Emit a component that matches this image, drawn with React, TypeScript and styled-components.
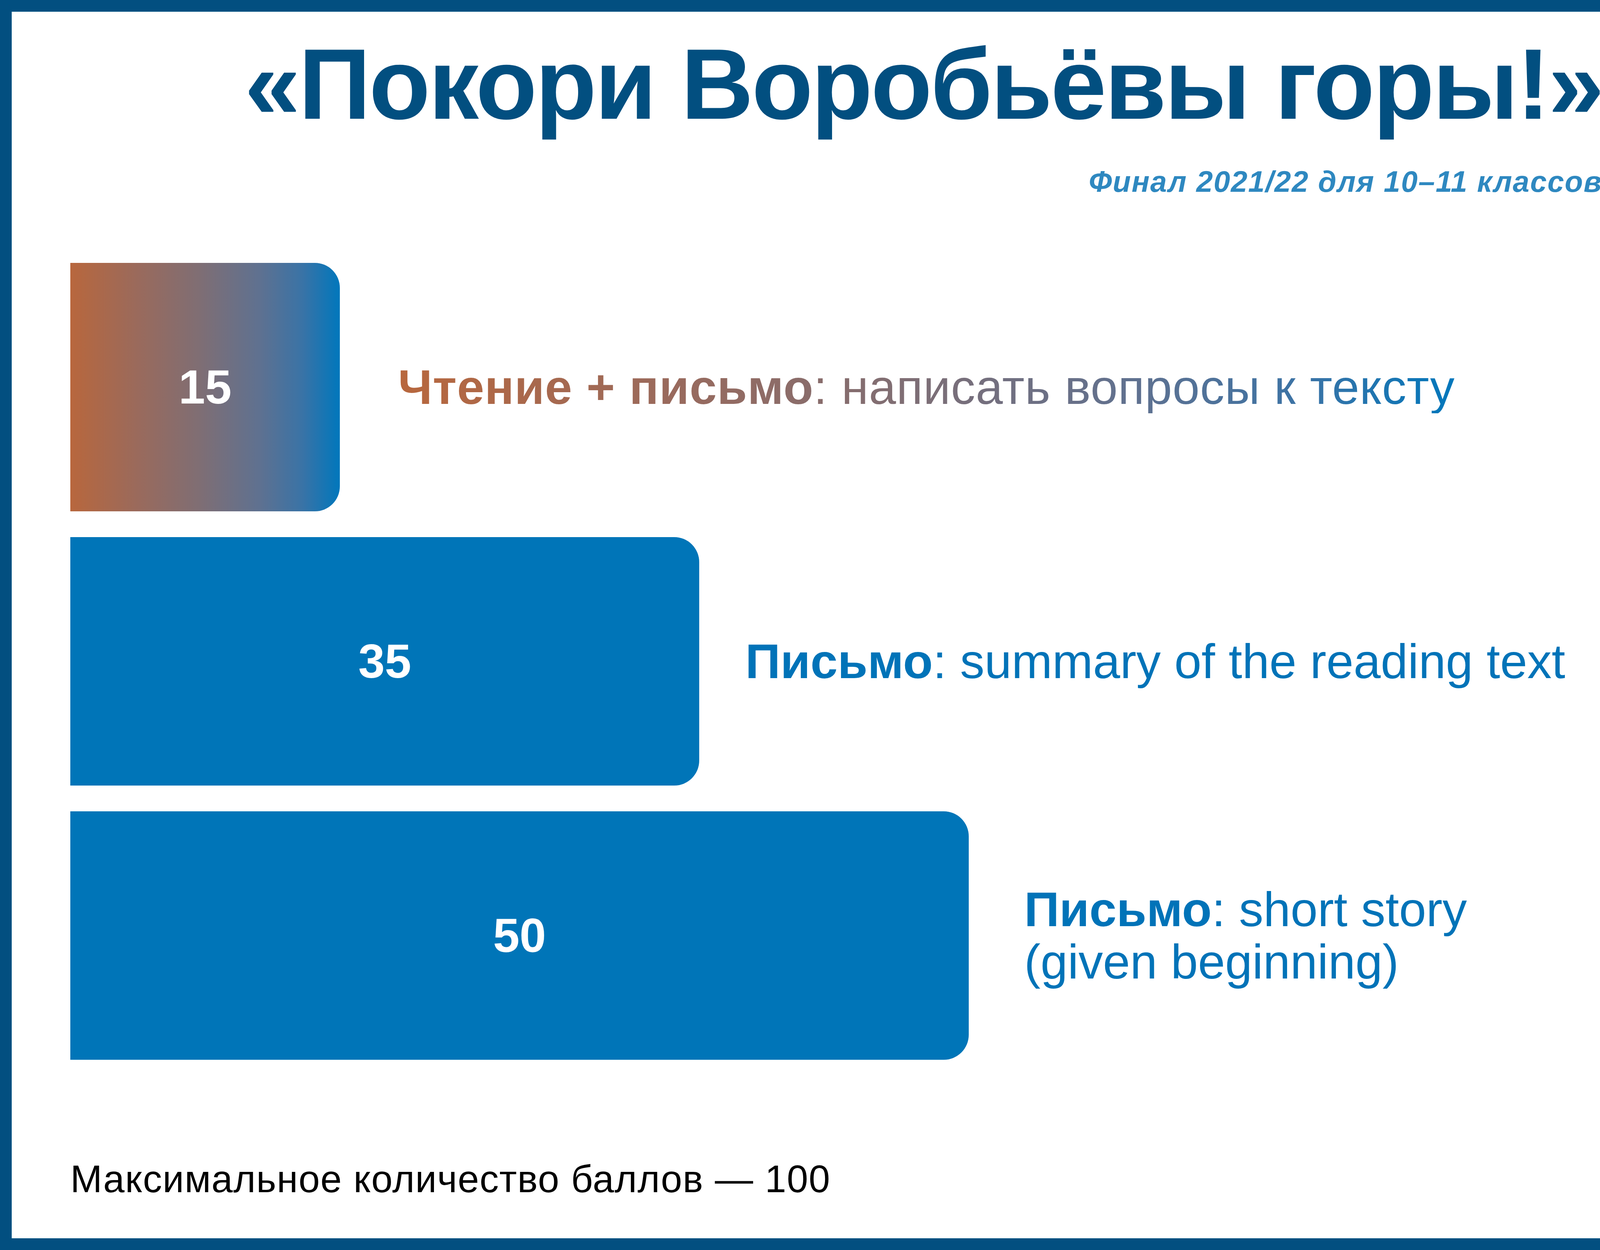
import React from "react";
import styled, { createGlobalStyle } from "styled-components";

const GlobalStyle = createGlobalStyle`
  html, body {
    margin: 0;
    padding: 0;
    background: #fff;
  }
`;

const SCALE = 46;
const SUNSET = "linear-gradient(90deg, #b8673d 0%, #9a6a5c 25%, #7f6e74 48%, #5f7190 70%, #3a73a6 86%, #0077bc 100%)";

const Slide = styled.div`
  box-sizing: border-box;
  width: 4267px;
  height: 3200px;
  border: 30px solid #024f80;
  background: #fff;
  padding: 56px 135px 0 150px;
  display: flex;
  flex-direction: column;
  font-family: "Liberation Sans", Arial, sans-serif;
`;

const Header = styled.header`
  display: flex;
  flex-direction: column;
  align-items: flex-end;
`;

const Title = styled.h1`
  margin: 0;
  font-size: 257px;
  line-height: 1;
  font-weight: 700;
  color: #024f80;
  letter-spacing: -4.5px;
  white-space: nowrap;
`;

const Subtitle = styled.p`
  margin: 84px 0 0;
  font-size: 76px;
  line-height: 1;
  font-weight: 700;
  font-style: italic;
  letter-spacing: 2px;
  color: #2e88c0;
  white-space: nowrap;
`;

const Chart = styled.section`
  display: flex;
  flex-direction: column;
  gap: 66px;
  margin-top: 170px;
`;

const Row = styled.div`
  display: flex;
  align-items: center;
  height: 636px;
`;

const Bar = styled.div<{ $fill: string }>`
  flex: none;
  height: 100%;
  border-radius: 0 64px 64px 0;
  background: ${(p) => p.$fill};
  display: flex;
  align-items: center;
  justify-content: center;
`;

const Score = styled.span`
  font-size: 122px;
  font-weight: 700;
  color: #fff;
  line-height: 1;
`;

const Label = styled.div<{ $gap: number; $spacing?: number }>`
  margin-left: ${(p) => p.$gap}px;
  font-size: 125px;
  line-height: 1.07;
  letter-spacing: ${(p) => p.$spacing ?? 0}px;
  color: #0073b8;
  white-space: nowrap;
`;

const GradientText = styled.span`
  display: inline-block;
  background: ${SUNSET};
  -webkit-background-clip: text;
  background-clip: text;
  color: transparent;
`;

const Strong = styled.b`
  font-weight: 700;
`;

const Footer = styled.p`
  margin: 256px 0 0;
  font-size: 98px;
  line-height: 1;
  letter-spacing: 1.5px;
  color: #000;
  white-space: nowrap;
`;

const rows = [
  {
    score: 15,
    fill: SUNSET,
    gap: 149,
    spacing: 1,
    label: (
      <GradientText>
        <Strong>Чтение + письмо</Strong>: написать вопросы к тексту
      </GradientText>
    ),
  },
  {
    score: 35,
    fill: "#0075b8",
    gap: 118,
    spacing: 0,
    label: (
      <>
        <Strong>Письмо</Strong>: summary of the reading text
      </>
    ),
  },
  {
    score: 50,
    fill: "#0075b8",
    gap: 142,
    spacing: 0,
    label: (
      <>
        <Strong>Письмо</Strong>: short story
        <br />
        (given beginning)
      </>
    ),
  },
];

export default function App() {
  return (
    <>
      <GlobalStyle />
      <Slide>
        <Header>
          <Title>«Покори Воробьёвы горы!»</Title>
          <Subtitle>Финал 2021/22 для 10–11 классов</Subtitle>
        </Header>
        <Chart>
          {rows.map((r) => (
            <Row key={r.score}>
              <Bar $fill={r.fill} style={{ width: r.score * SCALE }}>
                <Score>{r.score}</Score>
              </Bar>
              <Label $gap={r.gap} $spacing={r.spacing}>
                {r.label}
              </Label>
            </Row>
          ))}
        </Chart>
        <Footer>Максимальное количество баллов — 100</Footer>
      </Slide>
    </>
  );
}
